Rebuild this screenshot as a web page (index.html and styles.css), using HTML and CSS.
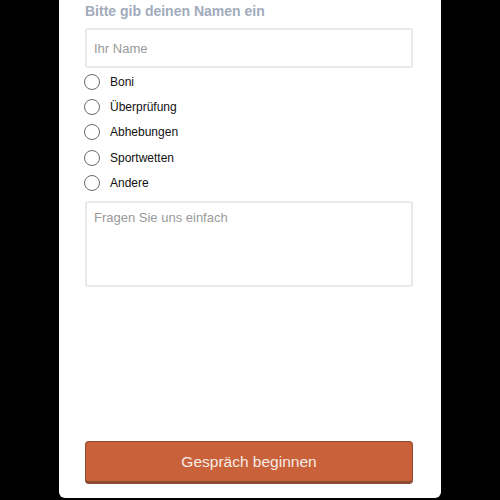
FILE: index.html
```html
<!DOCTYPE html>
<html lang="de">
<head>
<meta charset="utf-8">
<link rel="stylesheet" href="styles.css">
</head>
<body>
<div class="panel">
  <div class="title">Bitte gib deinen Namen ein</div>
  <input class="field" type="text" placeholder="Ihr Name">
  <div class="options">
    <label class="option"><span class="radio"></span><span>Boni</span></label>
    <label class="option"><span class="radio"></span><span>Überprüfung</span></label>
    <label class="option"><span class="radio"></span><span>Abhebungen</span></label>
    <label class="option"><span class="radio"></span><span>Sportwetten</span></label>
    <label class="option"><span class="radio"></span><span>Andere</span></label>
  </div>
  <textarea class="area" placeholder="Fragen Sie uns einfach"></textarea>
  <button class="start">Gespräch beginnen</button>
</div>
</body>
</html>
```
FILE: styles.css
```css
html, body {
  margin: 0;
  padding: 0;
  background: #000;
  height: 500px;
  overflow: hidden;
}
body {
  font-family: "Liberation Sans", Arial, sans-serif;
}
.panel {
  margin-left: 59px;
  width: 382px;
  height: 498px;
  box-sizing: border-box;
  padding: 2px 28px 14px 26px;
  background: #fff;
  border-radius: 0 0 6px 6px;
  display: flex;
  flex-direction: column;
}
.title {
  font-size: 14px;
  font-weight: bold;
  line-height: 18px;
  color: #a2abbc;
  margin-bottom: 8px;
}
.field {
  box-sizing: border-box;
  height: 40px;
  width: 100%;
  border: 2px solid #e9e9e9;
  border-radius: 3px;
  padding: 0 7px;
  font-family: inherit;
  font-size: 13px;
  outline: none;
}
.field::placeholder, .area::placeholder {
  color: #9a9a9a;
}
.options {
  display: flex;
  flex-direction: column;
  padding-top: 1px;
}
.option {
  display: flex;
  align-items: center;
  height: 25.4px;
  font-size: 12px;
  color: #111;
}
.radio {
  box-sizing: border-box;
  width: 16px;
  height: 16px;
  border: 1.5px solid #6b6b6b;
  border-radius: 50%;
  margin-left: -1px;
  margin-right: 10px;
}
.area {
  box-sizing: border-box;
  margin-top: 5px;
  height: 86px;
  width: 100%;
  border: 2px solid #e9e9e9;
  border-radius: 3px;
  padding: 7px 7px;
  font-family: inherit;
  font-size: 13px;
  resize: none;
  outline: none;
}
.start {
  margin-top: auto;
  height: 43px;
  width: 100%;
  border: 1px solid #8c4a30;
  border-bottom-width: 3px;
  border-radius: 4px;
  background: #c9613a;
  color: #f7ebe5;
  font-family: inherit;
  font-size: 15.5px;
}
```
